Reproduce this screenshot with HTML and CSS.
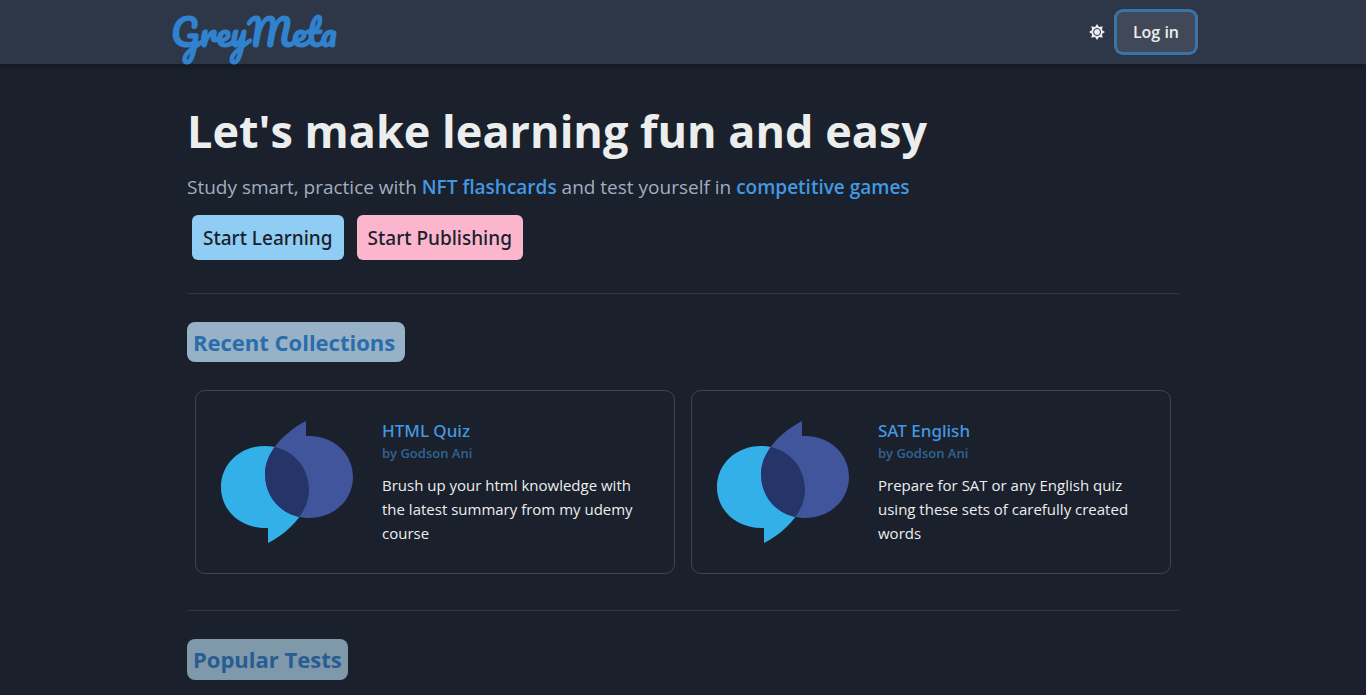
FILE: index.html
```html
<!DOCTYPE html>
<html lang="en">
<head>
<meta charset="utf-8">
<meta name="viewport" content="width=device-width, initial-scale=1">
<title>GreyMeta</title>
<link rel="stylesheet" href="styles.css">
</head>
<body>
<svg class="sprite" aria-hidden="true">
  <defs>
    <path id="bubble" d="M48 123V108C20 109 1 90 1 67C1 44 20 26 45 26C70 26 89 45 89 70C89 91 71 111 48 123Z"/>
    <clipPath id="bubble-clip"><use href="#bubble"/></clipPath>
    <symbol id="chat" viewBox="0 0 134 124">
      <use href="#bubble" fill="#32b0e7"/>
      <use href="#bubble" fill="#41559d" transform="rotate(180 67 62)"/>
      <g clip-path="url(#bubble-clip)"><use href="#bubble" fill="#253469" transform="rotate(180 67 62)"/></g>
    </symbol>
  </defs>
</svg>
<header class="topbar">
  <div class="topbar-inner">
    <a class="logo" href="#">GreyMeta</a>
    <div class="actions">
      <button class="theme" type="button" aria-label="Toggle theme">
        <svg viewBox="0 0 16 16" width="16" height="16" aria-hidden="true">
          <path fill="currentColor" d="M8 0L10 3.1L13.7 2.3L12.9 6L16 8L12.9 10L13.7 13.7L10 12.9L8 16L6 12.9L2.3 13.7L3.1 10L0 8L3.1 6L2.3 2.3L6 3.1Z"/>
          <circle cx="8" cy="8" r="3.5" fill="currentColor" stroke="#2d3748" stroke-width="1"/>
        </svg>
      </button>
      <button class="login" type="button">Log in</button>
    </div>
  </div>
</header>
<main class="page">
  <section class="hero">
    <h1>Let's make learning fun and easy</h1>
    <p class="lead">Study smart, practice with <strong>NFT flashcards</strong> and test yourself in <strong>competitive games</strong></p>
    <div class="cta">
      <button class="btn btn-blue" type="button">Start Learning</button>
      <button class="btn btn-pink" type="button">Start Publishing</button>
    </div>
  </section>
  <section class="block">
    <h2 class="tag">Recent Collections</h2>
    <div class="cards">
      <article class="card">
        <svg class="art" viewBox="0 0 134 124" aria-hidden="true"><use href="#chat"/></svg>
        <div class="info">
          <h3><a href="#">HTML Quiz</a></h3>
          <p class="by">by Godson Ani</p>
          <p class="desc">Brush up your html knowledge with the latest summary from my udemy course</p>
        </div>
      </article>
      <article class="card">
        <svg class="art" viewBox="0 0 134 124" aria-hidden="true"><use href="#chat"/></svg>
        <div class="info">
          <h3><a href="#">SAT English</a></h3>
          <p class="by">by Godson Ani</p>
          <p class="desc">Prepare for SAT or any English quiz using these sets of carefully created words</p>
        </div>
      </article>
    </div>
  </section>
  <section class="block">
    <h2 class="tag tag-dim">Popular Tests</h2>
  </section>
</main>
</body>
</html>
```
FILE: styles.css
```css
* { box-sizing: border-box; }
body {
  margin: 0;
  background: #1a202c;
  color: #eceeee;
  font-family: "Segoe UI", "Open Sans", "Noto Sans", sans-serif;
  font-size: 15px;
  line-height: 24px;
}
h1, h2, h3, p { margin: 0; }
a { color: inherit; text-decoration: none; }
button { font: inherit; border: 0; cursor: pointer; }
.sprite { position: absolute; width: 0; height: 0; }
.topbar { background: #2d3748; box-shadow: 0 2px 6px rgba(0, 0, 0, 0.3); }
.topbar-inner {
  max-width: 1024px;
  height: 64px;
  margin: 0 auto;
  display: flex;
  align-items: center;
  justify-content: space-between;
}
.logo {
  font-family: Pacifico, Lato, cursive;
  font-size: 36px;
  font-weight: 700;
  line-height: 48px;
  color: #3182ce;
}
.actions { display: flex; align-items: center; gap: 12px; }
.theme { display: flex; padding: 0; background: none; color: #eceeee; }
.login {
  height: 40px;
  padding: 0 16px;
  border-radius: 6px;
  background: #414958;
  color: #eceeee;
  font-size: 16px;
  font-weight: 600;
  box-shadow: 0 0 0 3px #3a73a8;
}
.page { max-width: 1024px; margin: 0 auto; padding: 32px 16px 12px; }
.hero { padding-bottom: 33px; }
h1 { font-size: 45px; line-height: 70px; font-weight: 700; }
.lead { padding-top: 1px; font-size: 19px; line-height: 40px; color: #a0aec0; }
.lead strong { color: #4299e1; font-weight: 600; }
.cta { display: flex; flex-wrap: wrap; gap: 13px; padding: 8px 5px 0; }
.btn {
  height: 45px;
  padding: 0 11px;
  border-radius: 6px;
  color: #1a202c;
  font-family: "Segoe UI", "Noto Sans", sans-serif;
  font-size: 19px;
  font-weight: 500;
}
.btn-blue { background: #90cdf4; }
.btn-pink { background: #fbb6ce; }
.block { border-top: 1px solid #2f3541; padding: 28px 0 36px; }
.block:last-child { padding-bottom: 0; }
.tag {
  width: fit-content;
  padding: 3px 10px 3px 6px;
  border-radius: 8px;
  background: #97b2c6;
  color: #2b6cab;
  font-size: 22px;
  line-height: 34px;
  font-weight: 700;
}
.tag-dim { padding-right: 6px; padding-bottom: 4px; background: #7f98aa; color: #275d93; }
.cards {
  display: grid;
  grid-template-columns: repeat(auto-fit, minmax(400px, 1fr));
  gap: 16px;
  padding: 28px 8px 0;
}
.card {
  display: flex;
  gap: 28px;
  padding: 27px 24px 28px;
  border: 1px solid #3f444e;
  border-radius: 10px;
}
.art { flex: none; align-self: center; width: 134px; height: 124px; }
.info { flex: 1; }
h3 { font-family: "Segoe UI", "Noto Sans", sans-serif; font-size: 17px; line-height: 25px; font-weight: 500; color: #4299e1; }
.by { font-size: 13px; line-height: 20px; font-weight: 600; color: #316493; margin-bottom: 10px; }
```
